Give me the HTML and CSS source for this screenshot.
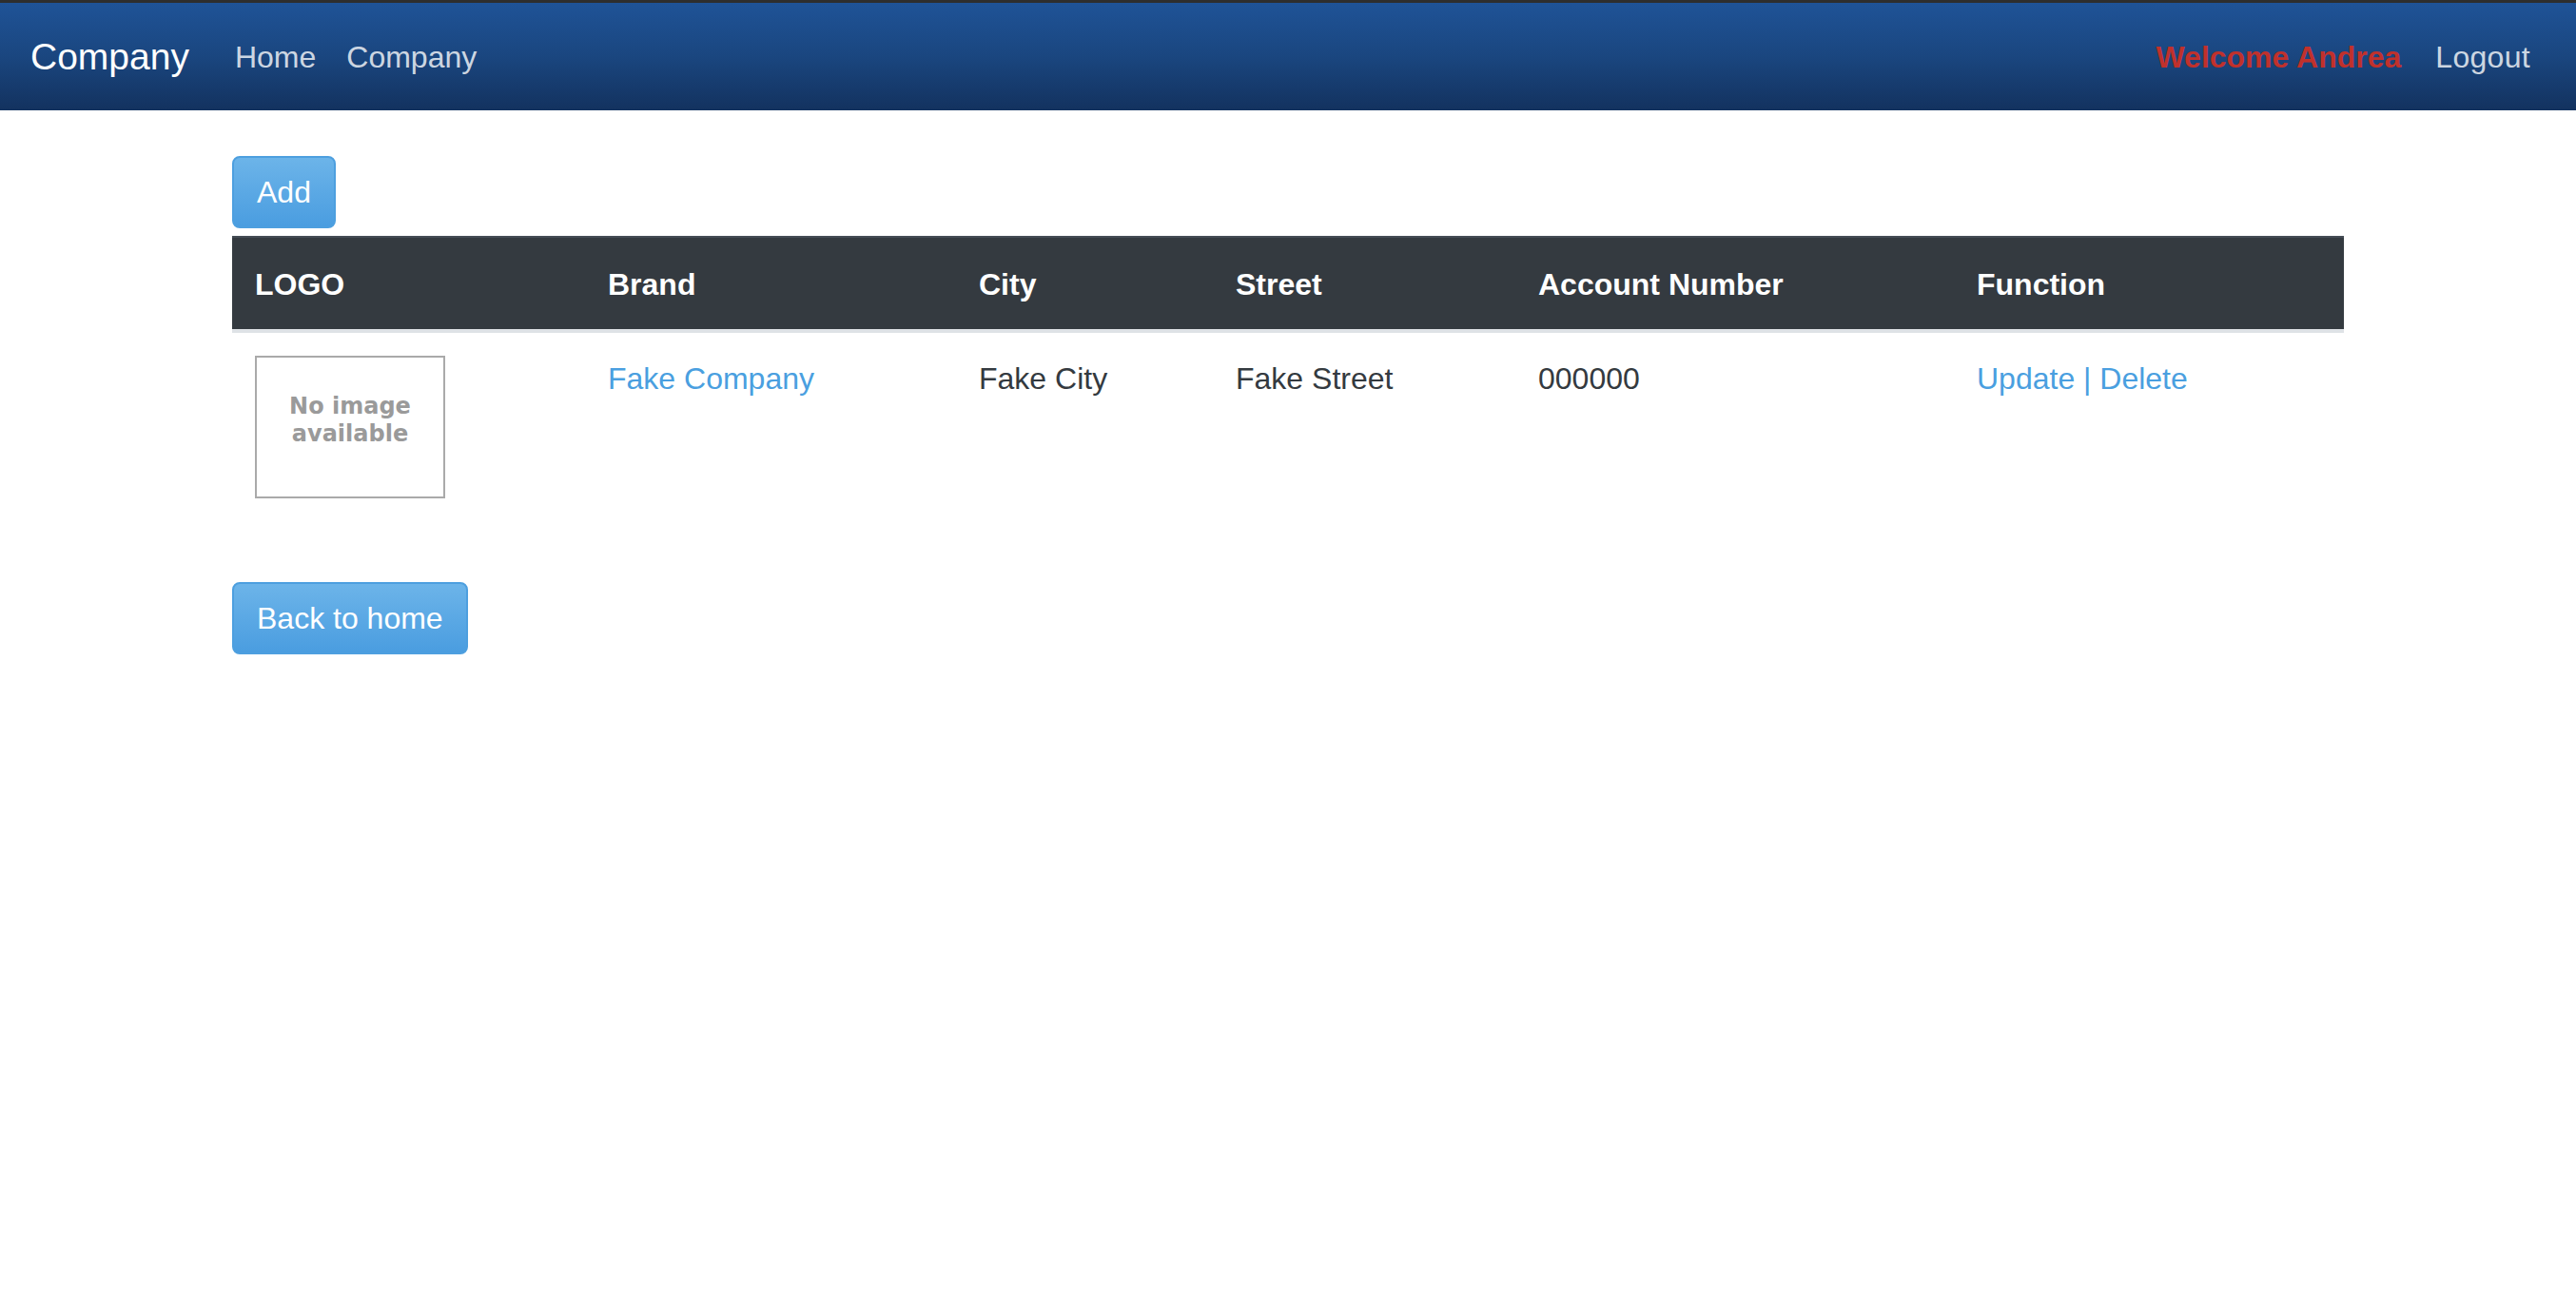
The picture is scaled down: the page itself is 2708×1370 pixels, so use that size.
FILE: index.html
```html
<!DOCTYPE html>
<html lang="en">
<head>
<meta charset="utf-8">
<title>Company</title>
<link rel="stylesheet" href="styles.css">
</head>
<body>
<div class="topstrip"></div>
<nav class="navbar">
  <a class="brand" href="#">Company</a>
  <ul class="nav">
    <li><a class="nav-link" href="#">Home</a></li>
    <li><a class="nav-link" href="#">Company</a></li>
  </ul>
  <ul class="nav nav-right">
    <li><span class="nav-link welcome">Welcome Andrea</span></li>
    <li><a class="nav-link logout" href="#">Logout</a></li>
  </ul>
</nav>
<main class="container">
  <a class="btn btn-add" href="#">Add</a>
  <table class="table">
    <colgroup>
      <col class="c1"><col class="c2"><col class="c3"><col class="c4"><col class="c5"><col class="c6">
    </colgroup>
    <thead>
      <tr>
        <th>LOGO</th>
        <th>Brand</th>
        <th>City</th>
        <th>Street</th>
        <th>Account Number</th>
        <th>Function</th>
      </tr>
    </thead>
    <tbody>
      <tr>
        <td><div class="noimg"><span>No image</span><span>available</span></div></td>
        <td><a href="#">Fake Company</a></td>
        <td>Fake City</td>
        <td>Fake Street</td>
        <td>000000</td>
        <td><a href="#">Update</a> <a href="#">|</a> <a href="#">Delete</a></td>
      </tr>
    </tbody>
  </table>
  <a class="btn" href="#">Back to home</a>
</main>
</body>
</html>
```

FILE: styles.css
```css
html, body {
  margin: 0;
  padding: 0;
}
body {
  font-family: "Liberation Sans", Arial, sans-serif;
  font-size: 32px;
  line-height: 1.5;
  color: #343a40;
  background: #fff;
}
a {
  color: #4a9fe0;
  text-decoration: none;
}
.topstrip {
  height: 3px;
  background: #2e2e2e;
}
.navbar {
  display: flex;
  align-items: center;
  height: 113px;
  box-sizing: border-box;
  padding: 0 32px;
  background: linear-gradient(to bottom, #1f5397 0%, #1a467f 50%, #13325f 100%);
}
.brand {
  color: #fff;
  font-size: 39px;
  line-height: 60px;
  margin-right: 32px;
}
.nav {
  display: flex;
  list-style: none;
  margin: 0;
  padding: 0;
}
.nav-right {
  margin-left: auto;
}
.nav-link {
  display: block;
  padding: 0 16px;
  color: rgba(255, 255, 255, 0.8);
  line-height: 48px;
}
.logout {
  padding-left: 18px;
  letter-spacing: 0.3px;
}
.welcome {
  color: #c0312c;
  font-weight: bold;
  padding-right: 18px;
}
.container {
  width: 2220px;
  margin: 0 auto;
  padding-top: 48px;
}
.btn {
  display: inline-block;
  padding: 12px 24px;
  line-height: 48px;
  font-size: 32px;
  color: #fff;
  background: linear-gradient(to bottom, #6cb4e9, #4a9de0);
  border: 2px solid #4d9fdf;
  border-radius: 8px;
}
.table {
  width: 2220px;
  border-collapse: collapse;
  table-layout: fixed;
  margin-top: 8px;
  margin-bottom: 64px;
}
.c1 { width: 371px; }
.c2 { width: 390px; }
.c3 { width: 270px; }
.c4 { width: 318px; }
.c5 { width: 461px; }
.c6 { width: 410px; }
.table th {
  background: #343a40;
  color: #fff;
  font-weight: bold;
  text-align: left;
  padding: 25px 24px 23px;
  line-height: 48px;
  border-top: 2px solid #454d55;
  border-bottom: 4px solid #dee2e6;
}
.table td {
  padding: 24px;
  vertical-align: top;
  line-height: 48px;
}
.noimg {
  width: 200px;
  height: 150px;
  box-sizing: border-box;
  border: 2px solid #aaaaaa;
  display: flex;
  flex-direction: column;
  align-items: center;
  justify-content: center;
  padding-bottom: 14px;
  font-family: "DejaVu Sans", sans-serif;
  font-weight: bold;
  font-size: 24px;
  line-height: 29px;
  color: #9a9a9a;
}
```
